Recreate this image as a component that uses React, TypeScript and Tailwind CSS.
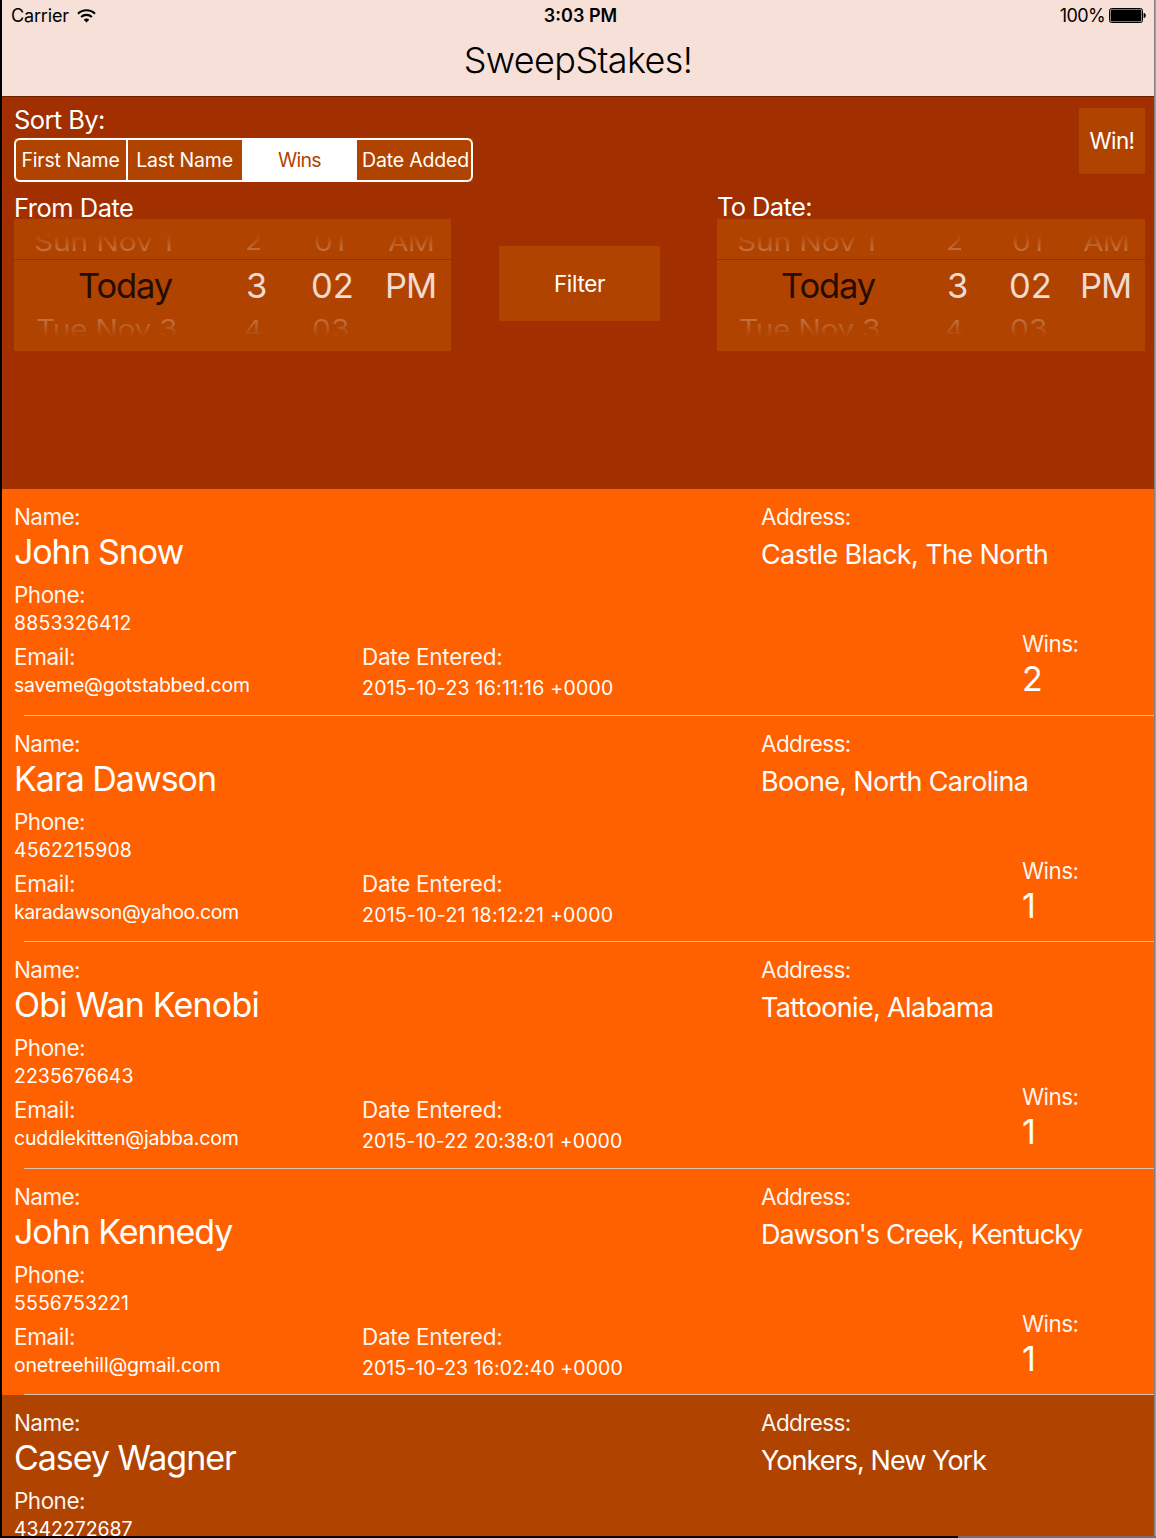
import React from "react";

type Entry = {
  name: [string, string];
  phone: [string, string];
  email: [string, string];
  date: [string, string];
  address: [string, string];
  wins: string;
  row: string;
};

const entries: Entry[] = [
  {
    name: ["John Snow", "tracking-[-1.09px]"],
    phone: ["8853326412", "tracking-[0.15px]"],
    email: ["saveme@gotstabbed.com", "tracking-[-0.22px]"],
    date: ["2015-10-23 16:11:16 +0000", "tracking-[0.24px]"],
    address: ["Castle Black, The North", "tracking-[-0.62px]"],
    wins: "2",
    row: "h-[227px] bg-[#ff6100]",
  },
  {
    name: ["Kara Dawson", "tracking-[-1.02px]"],
    phone: ["4562215908", "tracking-[0.15px]"],
    email: ["karadawson@yahoo.com", "tracking-[-0.44px]"],
    date: ["2015-10-21 18:12:21 +0000", "tracking-[0.24px]"],
    address: ["Boone, North Carolina", "tracking-[-0.69px]"],
    wins: "1",
    row: "h-[226px] bg-[#ff6100]",
  },
  {
    name: ["Obi Wan Kenobi", "tracking-[-0.79px]"],
    phone: ["2235676643", "tracking-[0.02px]"],
    email: ["cuddlekitten@jabba.com", "tracking-[-0.15px]"],
    date: ["2015-10-22 20:38:01 +0000", "tracking-[0.09px]"],
    address: ["Tattoonie, Alabama", "tracking-[-0.66px]"],
    wins: "1",
    row: "h-[227px] bg-[#ff6100]",
  },
  {
    name: ["John Kennedy", "tracking-[-1.05px]"],
    phone: ["5556753221", "tracking-[0.1px]"],
    email: ["onetreehill@gmail.com", "tracking-[-0.18px]"],
    date: ["2015-10-23 16:02:40 +0000", "tracking-[0.08px]"],
    address: ["Dawson's Creek, Kentucky", "tracking-[-0.91px]"],
    wins: "1",
    row: "h-[226px] bg-[#ff6100]",
  },
  {
    name: ["Casey Wagner", "tracking-[-1.03px]"],
    phone: ["4342272687", "tracking-[-0.06px]"],
    email: ["", ""],
    date: ["", ""],
    address: ["Yonkers, New York", "tracking-[-0.95px]"],
    wins: "",
    row: "h-[141px] bg-[#b14300]",
  },
];

function Label({ text, className }: { text: string; className: string }) {
  return <div className={`text-[22.5px] leading-[24px] text-white/95 ${className}`}>{text}</div>;
}

function EntryRow({ entry, last }: { entry: Entry; last: boolean }) {
  return (
    <li className={`relative grid grid-cols-[360px_399px_1fr] overflow-hidden whitespace-nowrap text-white ${entry.row}`}>
      <div className="pt-4 pl-3">
        <Label text="Name:" className="tracking-[-0.6px]" />
        <div className={`text-[34px] leading-[46px] ${entry.name[1]}`}>{entry.name[0]}</div>
        <Label text="Phone:" className="mt-2 tracking-[-0.52px]" />
        <div className={`mt-1 text-[19.5px] leading-[24px] ${entry.phone[1]}`}>{entry.phone[0]}</div>
        {!last && (
          <>
            <Label text="Email:" className="mt-2.5 tracking-[-0.35px]" />
            <div className={`mt-1 text-[19.5px] leading-[24px] ${entry.email[1]}`}>{entry.email[0]}</div>
          </>
        )}
      </div>
      <div className="pt-[156px]">
        {!last && (
          <>
            <Label text="Date Entered:" className="tracking-[-0.28px]" />
            <div className={`mt-[7px] text-[19.5px] leading-[24px] ${entry.date[1]}`}>{entry.date[0]}</div>
          </>
        )}
      </div>
      <div className="pt-4">
        <Label text="Address:" className="tracking-[-0.6px]" />
        <div className={`mt-3 text-[27px] leading-[28px] ${entry.address[1]}`}>{entry.address[0]}</div>
        {!last && (
          <div className="mt-[63px] ml-[261px]">
            <Label text="Wins:" className="tracking-[-0.55px]" />
            <div className="mt-[3px] text-[34px] leading-[40px]">{entry.wins}</div>
          </div>
        )}
      </div>
      {!last && <div className="absolute right-0 bottom-0 left-[22px] h-px bg-[#dcc3b0]" />}
    </li>
  );
}

function Picker({ columns }: { columns: string }) {
  return (
    <div className="h-[132px] overflow-hidden bg-[#b14300] whitespace-nowrap">
      <div className="h-10 pt-[7px] [mask-image:linear-gradient(to_bottom,transparent_15px,black_36px)]">
        <div className={`grid scale-y-[0.85] text-[30px] leading-[32px] text-white/30 ${columns}`}>
          <span className="pl-5 tracking-[-0.2px]">Sun Nov 1</span>
          <span className="pl-px text-[28px]">2</span>
          <span className="pl-1">01</span>
          <span className="pl-[3px] tracking-[-1px]">AM</span>
        </div>
      </div>
      <div className="h-px bg-[#8f3300]" />
      <div className={`grid text-[34.5px] leading-[51px] text-[#f1dacf] ${columns}`}>
        <span className="pl-16 tracking-[-1.1px] text-[#260d00]">Today</span>
        <span className="pl-0.5">3</span>
        <span className="pl-px">02</span>
        <span className="tracking-[-1px]">PM</span>
      </div>
      <div className="pt-px [mask-image:linear-gradient(to_bottom,black_4px,transparent_26px)]">
        <div className={`grid scale-y-[0.85] text-[30px] leading-[35px] text-white/30 ${columns}`}>
          <span className="pl-[22px] tracking-[-0.39px]">Tue Nov 3</span>
          <span className="text-[28px]">4</span>
          <span className="pl-0.5">03</span>
        </div>
      </div>
    </div>
  );
}

export default function App() {
  return (
    <div className="flex h-[1538px] w-[1156px] flex-col overflow-hidden bg-black font-['Inter',sans-serif]">
      <div className="flex min-h-0 flex-1">
        <div className="ml-0.5 w-[1152px] overflow-hidden bg-[#a12f00]">
          <header className="h-[97px] border-b border-[#6e1f00] bg-[#f6e0d8] text-black">
            <div className="grid h-[31px] grid-cols-3 items-center text-[18px] leading-[31px]">
              <div className="flex items-center pl-[9px]">
                <span className="tracking-[-0.15px]">Carrier</span>
                <svg className="ml-2 h-[14px] w-[19px]" viewBox="0 0 19 14" fill="none" stroke="black">
                  <path d="M1 4.7a12.2 12.2 0 0 1 17 0" strokeWidth="2.2" />
                  <path d="M4.1 8a7.8 7.8 0 0 1 10.8 0" strokeWidth="2.1" />
                  <path d="M9.5 13.6 6.7 10.8a4 4 0 0 1 5.6 0Z" fill="black" stroke="none" />
                </svg>
              </div>
              <div className="pl-[5px] text-center font-semibold">3:03 PM</div>
              <div className="flex items-center justify-end pr-2">
                <span className="tracking-[-0.6px]">100%</span>
                <svg className="ml-1 h-[15px] w-[37px]" viewBox="0 0 37 15">
                  <rect x="0.5" y="0.5" width="33" height="14" rx="2" fill="none" stroke="black" strokeWidth="1" />
                  <rect x="1.6" y="1.6" width="30.8" height="11.8" rx="0.8" />
                  <path d="M34.6 5h.8q1.4.7 1.4 2.5T35.4 10h-.8Z" />
                </svg>
              </div>
            </div>
            <h1 className="text-center text-[36px] leading-[58px] font-light tracking-[-0.62px]">SweepStakes!</h1>
          </header>

          <section className="flex h-[392px] justify-between pr-[9px] pl-3 text-white">
            <div className="w-[459px]">
              <div className="pt-2.5 text-[25.5px] leading-[26px] tracking-[-0.6px]">Sort By:</div>
              <div className="mt-[5px] bg-[#b14300]">
                <div className="flex h-11 overflow-hidden rounded-md border-2 border-white text-center text-[19.5px] leading-10 whitespace-nowrap">
                  <div className="w-[112px] border-r-2 border-white pr-px tracking-[-0.16px]">First Name</div>
                  <div className="w-[114px] pr-px tracking-[-0.17px]">Last Name</div>
                  <div className="w-[115px] bg-white tracking-[-0.7px] text-[#b14300]">Wins</div>
                  <div className="flex-1 pl-[3px] tracking-[-0.18px]">Date Added</div>
                </div>
              </div>
              <div className="mt-[13px] h-6 text-[25.5px] leading-[26px] tracking-[-0.51px]">From Date</div>
              <div className="w-[437px]">
                <Picker columns="grid-cols-[230px_66px_75px_66px]" />
              </div>
            </div>
            <button className="mt-[149px] mr-[31px] h-[75px] w-[161px] bg-[#b14300] text-[22.5px] tracking-[-0.35px]">
              Filter
            </button>
            <div className="w-[428px]">
              <button className="mt-[11px] ml-auto block h-[66px] w-[66px] bg-[#b14300] text-[22.5px] tracking-[-0.64px]">
                Win!
              </button>
              <div className="mt-5 h-[25px] text-[25.5px] leading-[26px] tracking-[-0.62px]">To Date:</div>
              <Picker columns="grid-cols-[228px_63px_72px_65px]" />
            </div>
          </section>

          <ul>
            {entries.map((entry, i) => (
              <EntryRow key={entry.name[0]} entry={entry} last={i === entries.length - 1} />
            ))}
          </ul>
        </div>
        <div className="w-0.5 bg-linear-to-r from-[#777777] to-[#aaaaaa]" />
      </div>
      <div className="flex h-0.5">
        <div className="w-[958px] bg-black" />
        <div className="flex-1 bg-[#707070]" />
      </div>
    </div>
  );
}
